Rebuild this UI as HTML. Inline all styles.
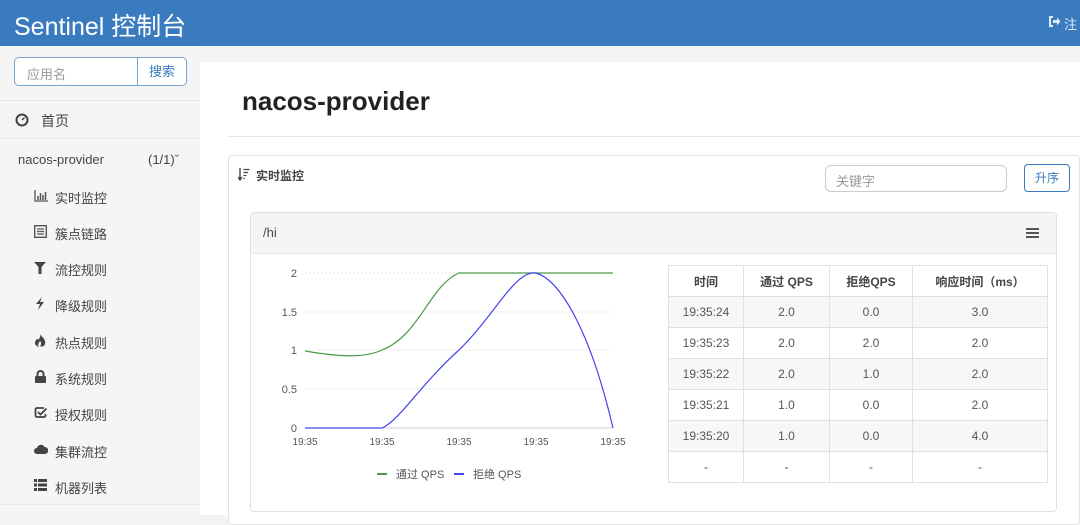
<!DOCTYPE html>
<html><head><meta charset="utf-8"><style>
*{box-sizing:border-box;margin:0;padding:0}
body{width:1080px;height:515px;overflow:hidden;background:#f3f3f3;font-family:"Liberation Sans","Noto Sans CJK SC",sans-serif;position:relative;color:#333}
.hdr{position:absolute;left:0;top:0;width:1080px;height:46px;background:#3a7bbf;color:#fff}
.hdr .t{position:absolute;left:14px;top:7px;font-size:25px}
.hdr .r{position:absolute;left:1046px;top:14px;font-size:13px;color:#dfe9f5}
.side{position:absolute;left:0;top:46px;width:200px;height:469px;background:#f5f5f5}
.srch{position:absolute;left:14px;top:11px;width:173px;height:29px;border:1px solid #7aa3cf;border-radius:5px;background:#fff}
.srch span{position:absolute;left:12px;top:6px;font-size:13px;color:#999}
.srch b{position:absolute;right:0;top:0;width:49px;height:27px;border-left:1px solid #7aa3cf;font-weight:normal;color:#3a7bbf;font-size:13px;text-align:center;line-height:27px}
.it{position:absolute;font-size:13px;color:#444}
.ic{position:absolute;left:34px}
.main{position:absolute;left:200px;top:62px;width:880px;height:453px;background:#fff}
.h1{position:absolute;left:242px;top:86px;font-size:26px;font-weight:bold;color:#222}
.hr{position:absolute;left:228px;top:136px;width:852px;height:1px;background:#e5e5e5}
.card{position:absolute;left:228px;top:155px;width:852px;height:370px;border:1px solid #e3e3e3;border-radius:4px;background:#fff}
.inner{position:absolute;left:250px;top:212px;width:807px;height:300px;border:1px solid #e0e0e0;border-radius:4px;background:#fff}
.inner .ih{height:41px;background:#f5f5f5;border-bottom:1px solid #e8e8e8;font-size:13px;padding:12px 0 0 12px;color:#444}
table{position:absolute;left:668px;top:265px;border-collapse:collapse;font-size:12px;color:#555}
td{border:1px solid #e0e0e0;text-align:center;height:31px;padding:0}
tr:nth-child(even) td{background:#f7f7f7}
tr:first-child td{font-weight:bold;color:#444;font-size:12px}
</style></head><body>
<div class="hdr"><div class="t">Sentinel 控制台</div>
<svg style="position:absolute;left:1047px;top:15px" width="14" height="13" viewBox="0 0 14 13"><path d="M6 2H3v9h3" fill="none" stroke="#dfe9f5" stroke-width="2"/><path d="M6 5h4V2.5L13.5 6.5 10 10.5V8H6z" fill="#dfe9f5"/></svg>
<div class="r" style="left:1064px">注</div></div>
<div class="side">
<div class="srch"><span>应用名</span><b>搜索</b></div>
<div style="position:absolute;left:0;top:54px;width:200px;height:1px;background:#e8e8e8"></div>
<svg style="position:absolute;left:15px;top:67px" width="14" height="14"><circle cx="7" cy="7" r="5.5" fill="none" stroke="#444" stroke-width="2"/><path d="M7 7L9.5 4.5" stroke="#444" stroke-width="1.5"/></svg>
<div class="it" style="left:41px;top:65px;font-size:14px">首页</div>
<div style="position:absolute;left:0;top:92px;width:200px;height:1px;background:#e8e8e8"></div>
<div class="it" style="left:18px;top:106px">nacos-provider</div>
<div class="it" style="left:148px;top:106px">(1/1)ˇ</div>
<svg class="ic" style="top:144px" width="14" height="12"><path d="M1 0v11h13" fill="none" stroke="#555" stroke-width="1.3"/><path d="M4 6v4M6.5 3v7M9 5v5M11.5 2v8" stroke="#555" stroke-width="1.5"/></svg>
<div class="it" style="left:55px;top:142px">实时监控</div>
<svg class="ic" style="top:179px" width="13" height="13"><rect x="0.7" y="0.7" width="11.6" height="11.6" fill="none" stroke="#555" stroke-width="1.4"/><path d="M3 4h7M3 6.5h7M3 9h7" stroke="#555" stroke-width="1.2"/></svg>
<div class="it" style="left:55px;top:178px">簇点链路</div>
<svg class="ic" style="top:216px" width="12" height="12"><path d="M0 0h12L7.5 5v7H4.5V5z" fill="#444"/></svg>
<div class="it" style="left:55px;top:214px">流控规则</div>
<svg class="ic" style="top:251px" width="12" height="13"><path d="M8 0L2 7h4L4 13l6-8H6z" fill="#444"/></svg>
<div class="it" style="left:55px;top:250px">降级规则</div>
<svg class="ic" style="top:288px" width="12" height="13"><path d="M6 0C9 4 12 6 11 10 10 13 7 13 6 12 8 10 7 8 6 7 5 9 3 10 5 13 1 12 0 9 2 6 3 5 4 4 4 6 6 4 7 2 6 0z" fill="#444"/></svg>
<div class="it" style="left:55px;top:287px">热点规则</div>
<svg class="ic" style="top:324px" width="13" height="13"><path d="M3.5 6V4a3 3 0 016 0v2" fill="none" stroke="#444" stroke-width="2"/><rect x="1" y="6" width="11" height="7" rx="1" fill="#444"/></svg>
<div class="it" style="left:55px;top:323px">系统规则</div>
<svg class="ic" style="top:360px" width="13" height="13"><path d="M10 2H3a1.5 1.5 0 00-1.5 1.5v6A1.5 1.5 0 003 11h7a1.5 1.5 0 001.5-1.5V8" fill="none" stroke="#444" stroke-width="1.8"/><path d="M4 6l2.5 2.5L12.5 2.5" fill="none" stroke="#444" stroke-width="1.8"/></svg>
<div class="it" style="left:55px;top:359px">授权规则</div>
<svg class="ic" style="top:398px" width="14" height="10"><path d="M3 10a3 3 0 010-6 4 4 0 017.5-1A3.5 3.5 0 0111 10z" fill="#444"/></svg>
<div class="it" style="left:55px;top:396px">集群流控</div>
<svg class="ic" style="top:433px" width="13" height="12"><path d="M0 0h3v3H0zM4 0h9v3H4zM0 4.5h3v3H0zM4 4.5h9v3H4zM0 9h3v3H0zM4 9h9v3H4z" fill="#444"/></svg>
<div class="it" style="left:55px;top:432px">机器列表</div>
<div style="position:absolute;left:0;top:458px;width:200px;height:1px;background:#e8e8e8"></div>
</div>
<div class="main"></div>
<div class="h1">nacos-provider</div>
<div class="hr"></div>
<div class="card">
<svg style="position:absolute;left:9px;top:12px" width="12" height="13"><path d="M2 0v11M0 9l2 3 2-3" fill="none" stroke="#444" stroke-width="1.4"/><path d="M5.5 1.5h6M5.5 4.5h4.5M5.5 7.5h3M5.5 10.5h1.5" stroke="#444" stroke-width="1.3"/></svg>
<div style="position:absolute;left:27px;top:11px;font-size:12px;font-weight:bold;color:#444">实时监控</div>
<div style="position:absolute;left:596px;top:9px;width:182px;height:27px;border:1px solid #ccc;border-radius:6px;font-size:13px;color:#999;padding:5px 10px">关键字</div>
<div style="position:absolute;left:795px;top:8px;width:46px;height:28px;border:1px solid #3a7bbf;border-radius:4px;font-size:12px;color:#3a7bbf;text-align:center;line-height:26px">升序</div>
</div>
<div class="inner"><div class="ih">/hi</div>
<div style="position:absolute;right:17px;top:15px;width:13px;height:10px;border-top:2px solid #555;border-bottom:2px solid #555"><div style="margin-top:2px;height:2px;background:#555"></div></div>
</div>
<svg style="position:absolute;left:0;top:0" width="1080" height="515" font-family="Liberation Sans" font-size="10" fill="#555">
<g stroke="#e6e6e6" stroke-dasharray="2,2"><line x1="305" y1="273" x2="613" y2="273"/><line x1="305" y1="312" x2="613" y2="312"/><line x1="305" y1="350" x2="613" y2="350"/><line x1="305" y1="389" x2="613" y2="389"/></g>
<line x1="305" y1="428" x2="613" y2="428" stroke="#ccc"/>
<g text-anchor="end" font-size="11"><text x="297" y="277">2</text><text x="297" y="316">1.5</text><text x="297" y="354">1</text><text x="297" y="393">0.5</text><text x="297" y="432">0</text></g>
<g text-anchor="middle"><text x="305" y="445">19:35</text><text x="382" y="445">19:35</text><text x="459" y="445">19:35</text><text x="536" y="445">19:35</text><text x="613" y="445">19:35</text></g>
<path d="M305 351 C340 357 365 358 382 350 C420 335 430 285 459 273 L613 273" fill="none" stroke="#4a9a4a" stroke-width="1.2"/>
<path d="M305 428 L382 428 C400 420 420 385 459 350 C495 315 515 270 536 273 C560 280 590 330 613 428" fill="none" stroke="#4444ee" stroke-width="1.2"/>
<line x1="377" y1="474" x2="387" y2="474" stroke="#4a9a4a" stroke-width="2"/><text x="396" y="478" font-size="11">通过 QPS</text>
<line x1="454" y1="474" x2="464" y2="474" stroke="#4444ee" stroke-width="2"/><text x="473" y="478" font-size="11">拒绝 QPS</text>
</svg>
<table>
<tr><td style="width:75px">时间</td><td style="width:86px">通过 QPS</td><td style="width:83px">拒绝QPS</td><td style="width:135px">响应时间（ms）</td></tr>
<tr><td>19:35:24</td><td>2.0</td><td>0.0</td><td>3.0</td></tr>
<tr><td>19:35:23</td><td>2.0</td><td>2.0</td><td>2.0</td></tr>
<tr><td>19:35:22</td><td>2.0</td><td>1.0</td><td>2.0</td></tr>
<tr><td>19:35:21</td><td>1.0</td><td>0.0</td><td>2.0</td></tr>
<tr><td>19:35:20</td><td>1.0</td><td>0.0</td><td>4.0</td></tr>
<tr><td>-</td><td>-</td><td>-</td><td>-</td></tr>
</table>
</body></html>
